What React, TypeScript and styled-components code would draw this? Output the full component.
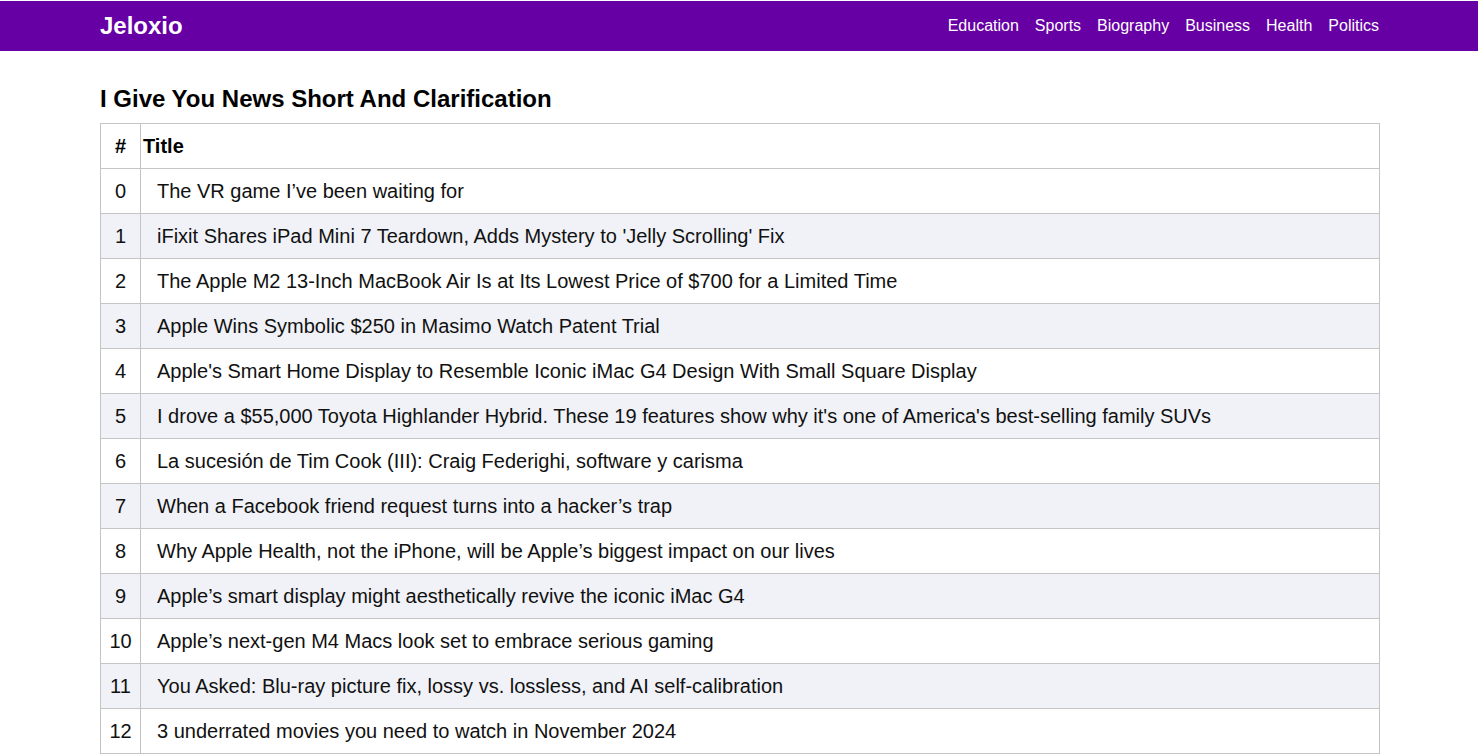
import React from "react";
import styled, { createGlobalStyle } from "styled-components";

const Global = createGlobalStyle`
  html, body { margin: 0; padding: 0; background: #fff; }
  body { font-family: "Liberation Sans", Arial, sans-serif; color: #000; }
  * { box-sizing: border-box; }
`;

const NavBar = styled.header`
  margin-top: 1px;
  height: 50px;
  background: #6600a5;
  display: flex;
  align-items: center;
  padding: 0 99px 0 100px;
`;

const NavInner = styled.div`
  flex: 1;
  display: flex;
  align-items: center;
  justify-content: space-between;
`;

const Logo = styled.div`
  color: #fff;
  font-size: 24px;
  font-weight: 700;
`;

const Links = styled.nav`
  display: flex;
  gap: 16px;
`;

const NavLink = styled.a`
  color: #fff;
  font-size: 16px;
  text-decoration: none;
`;

const Main = styled.main`
  padding: 34px 98px 0 100px;
`;

const Heading = styled.h2`
  margin: 0 0 10px;
  font-size: 24px;
  font-weight: 700;
  line-height: 28px;
`;

const Table = styled.table`
  width: 100%;
  border-collapse: collapse;
  font-size: 20px;
`;

const Row = styled.tr<{ $alt?: boolean }>`
  height: 45px;
  background: ${(p) => (p.$alt ? "#f0f2f7" : "#fff")};
`;

const Th = styled.th<{ $num?: boolean }>`
  border: 1px solid #c4c4c4;
  padding: 0 2px;
  font-weight: 700;
  text-align: ${(p) => (p.$num ? "center" : "left")};
  width: ${(p) => (p.$num ? "40px" : "auto")};
`;

const Td = styled.td<{ $num?: boolean }>`
  border: 1px solid #c4c4c4;
  padding: ${(p) => (p.$num ? "0" : "0 16px")};
  text-align: ${(p) => (p.$num ? "center" : "left")};
  color: #111;
`;

const titles = [
  "The VR game I\u2019ve been waiting for",
  "iFixit Shares iPad Mini 7 Teardown, Adds Mystery to 'Jelly Scrolling' Fix",
  "The Apple M2 13-Inch MacBook Air Is at Its Lowest Price of $700 for a Limited Time",
  "Apple Wins Symbolic $250 in Masimo Watch Patent Trial",
  "Apple's Smart Home Display to Resemble Iconic iMac G4 Design With Small Square Display",
  "I drove a $55,000 Toyota Highlander Hybrid. These 19 features show why it's one of America's best-selling family SUVs",
  "La sucesi\u00f3n de Tim Cook (III): Craig Federighi, software y carisma",
  "When a Facebook friend request turns into a hacker\u2019s trap",
  "Why Apple Health, not the iPhone, will be Apple\u2019s biggest impact on our lives",
  "Apple\u2019s smart display might aesthetically revive the iconic iMac G4",
  "Apple\u2019s next-gen M4 Macs look set to embrace serious gaming",
  "You Asked: Blu-ray picture fix, lossy vs. lossless, and AI self-calibration",
  "3 underrated movies you need to watch in November 2024",
];

const links = ["Education", "Sports", "Biography", "Business", "Health", "Politics"];

export default function App() {
  return (
    <>
      <Global />
      <NavBar>
        <NavInner>
          <Logo>Jeloxio</Logo>
          <Links>
            {links.map((l) => (
              <NavLink key={l} href="#">
                {l}
              </NavLink>
            ))}
          </Links>
        </NavInner>
      </NavBar>
      <Main>
        <Heading>I Give You News Short And Clarification</Heading>
        <Table>
          <thead>
            <Row>
              <Th $num>#</Th>
              <Th>Title</Th>
            </Row>
          </thead>
          <tbody>
            {titles.map((t, i) => (
              <Row key={i} $alt={i % 2 === 1}>
                <Td $num>{i}</Td>
                <Td>{t}</Td>
              </Row>
            ))}
          </tbody>
        </Table>
      </Main>
    </>
  );
}
